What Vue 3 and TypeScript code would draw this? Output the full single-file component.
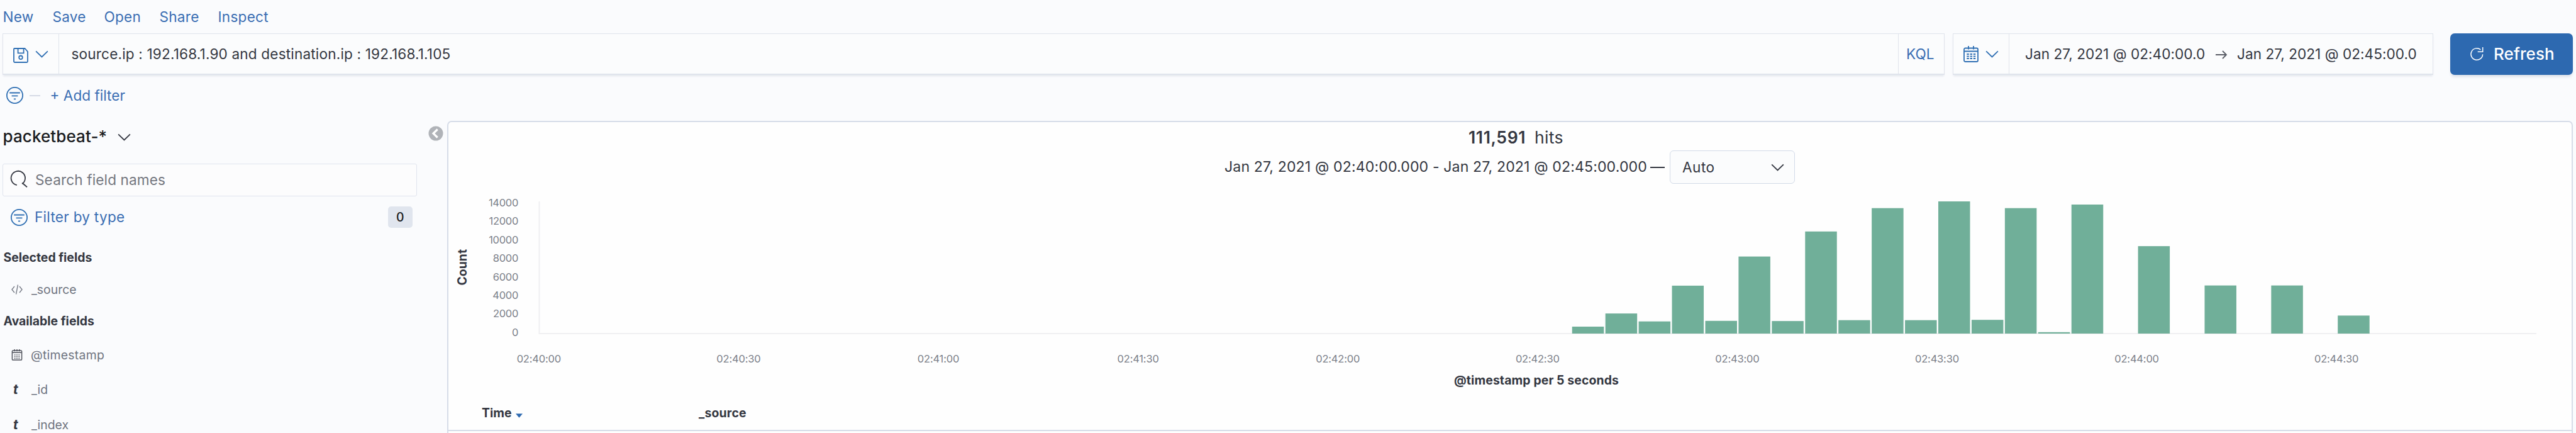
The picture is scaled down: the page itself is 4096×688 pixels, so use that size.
<script setup lang="ts">
const menu = [
  { label: 'New', cls: 'm-new' },
  { label: 'Save', cls: 'm-save' },
  { label: 'Open', cls: 'm-open' },
  { label: 'Share', cls: 'm-share' },
  { label: 'Inspect', cls: 'm-inspect' },
]

const yTicks = [14000, 12000, 10000, 8000, 6000, 4000, 2000, 0]
const xTicks = ['02:40:00', '02:40:30', '02:41:00', '02:41:30', '02:42:00', '02:42:30', '02:43:00', '02:43:30', '02:44:00', '02:44:30']

const chartWidth = 3176
const bucketCount = 60
const firstBucket = 31
const pitch = chartWidth / bucketCount
const heights = [11, 31.9, 19.3, 76.1, 20.2, 122.4, 19.9, 162.2, 21.3, 199.3, 21.3, 210, 21.8, 199.3, 2.2, 205, 0, 138.9, 0, 76.4, 0, 76.4, 0, 28.6]
const bars = heights
  .map((h, i) => ({ x: (firstBucket + i) * pitch + 1.8, y: 210 - h, h }))
  .filter((b) => b.h > 0)
</script>

<template>
  <div class="app">
    <nav class="menu">
      <a v-for="m in menu" :key="m.label" :class="m.cls"><span>{{ m.label }}</span></a>
    </nav>

    <div class="querybar">
      <div class="box query">
        <div class="saved">
          <svg class="floppy" viewBox="0 0 24 24"><path d="M2 1h16.500L23 6v15.500a1.500 1.500 0 0 1-1.500 1.500h-19A1.500 1.500 0 0 1 1 21.500V2a1 1 0 0 1 1-1zM7.600 1v7.300h9V1" /><circle cx="12" cy="15.300" r="2.800" /></svg>
          <svg class="chev" viewBox="0 0 22 12"><path d="M1.2 1.2 11 10.6 20.8 1.2" /></svg>
        </div>
        <div class="qtext"><span class="t-query">source.ip : 192.168.1.90 and destination.ip : 192.168.1.105</span></div>
        <div class="kql"><span class="t-kql">KQL</span></div>
      </div>
      <div class="box dates">
        <div class="quick">
          <svg class="cal" viewBox="0 0 24 26"><path d="M3 3.5h18a2 2 0 0 1 2 2V23a2 2 0 0 1-2 2H3a2 2 0 0 1-2-2V5.500a2 2 0 0 1 2-2zM1 8.500h22M8 0v5.500M16 0v5.500" /><path class="dots" d="M5.300 13h14M5.300 16.500h14M5.300 20h14" /></svg>
          <svg class="chev" viewBox="0 0 22 12"><path d="M1.2 1.2 11 10.6 20.8 1.2" /></svg>
        </div>
        <span class="from">Jan 27, 2021 @ 02:40:00.0</span>
        <svg class="arrow" viewBox="0 0 18 14"><path d="M0 7h16.500M11 1l6 6-6 6" /></svg>
        <span class="to">Jan 27, 2021 @ 02:45:00.0</span>
      </div>
      <button class="refresh">
        <svg viewBox="0 0 21 22"><path d="M16.300 3.900A9.300 9.300 0 1 0 19.600 11.200M19.700 0v7.200h-8" /></svg>
        <span class="t-refresh">Refresh</span>
      </button>
    </div>

    <div class="filters">
      <svg class="filt" viewBox="0 0 27 27"><circle cx="13.500" cy="13.500" r="12.600" /><path d="M5.200 9.500h16.600M8.600 14.400h9.800M11.900 19.300h3.200" /></svg>
      <i class="dash"></i>
      <span class="t-add">+ Add filter</span>
    </div>

    <div class="body">
      <aside class="side">
        <div class="pattern">
          <span class="t-pattern">packetbeat-*</span>
          <svg class="chev dark" viewBox="0 0 22 12"><path d="M1.2 1.2 11 10.6 20.8 1.2" /></svg>
          <svg class="collapse" viewBox="0 0 24 24"><circle cx="12" cy="12" r="11.500" /><path d="M14.700 5.500 8 12l6.700 6.500" /></svg>
        </div>
        <div class="search">
          <svg viewBox="0 0 27 27"><path d="M9.800 23A11.200 11.200 0 1 1 18.200 21.200M18.200 19.500 26 26.300" /></svg>
          <span class="t-search">Search field names</span>
        </div>
        <div class="bytype">
          <svg class="filt" viewBox="0 0 27 27"><circle cx="13.500" cy="13.500" r="12.600" /><path d="M5.200 9.500h16.600M8.600 14.400h9.800M11.900 19.300h3.200" /></svg>
          <span class="t-type">Filter by type</span>
          <b>0</b>
        </div>
        <h4 class="h-sel"><span>Selected fields</span></h4>
        <div class="field f-source">
          <svg viewBox="0 0 18 16"><path class="thin" d="M5 3 1 8l4 5M13 3l4 5-4 5M10.500 .5l-3 15" /></svg>
          <span>_source</span>
        </div>
        <h4 class="h-avail"><span>Available fields</span></h4>
        <div class="field f-ts">
          <svg viewBox="0 0 18 19"><path class="calp" d="M2.500 2h13a1.500 1.500 0 0 1 1.500 1.500v13a1.500 1.500 0 0 1-1.500 1.500h-13A1.500 1.500 0 0 1 1 16.500v-13A1.500 1.500 0 0 1 2.500 2zM1 5.500h16M5 0v3.500M9 0v3.500M13 0v3.500" /><path class="cald" d="M4.500 9.500h9M4.500 12.500h9M4.500 15.200h9" /></svg>
          <span class="t-ts">@timestamp</span>
        </div>
        <div class="field f-id"><em>t</em><span>_id</span></div>
        <div class="field f-index"><em>t</em><span>_index</span></div>
      </aside>

      <main class="panel">
        <div class="hits"><strong>111,591</strong><span>hits</span></div>
        <div class="range">
          <span class="t-range">Jan 27, 2021 @ 02:40:00.000 - Jan 27, 2021 @ 02:45:00.000</span>
          <i></i>
          <div class="select">
            <span class="t-auto">Auto</span>
            <svg class="chev dark" viewBox="0 0 22 12"><path d="M1.2 1.2 11 10.6 20.8 1.2" /></svg>
          </div>
        </div>
        <div class="chart">
          <div class="ytitle"><span>Count</span></div>
          <div class="yaxis"><span v-for="t in yTicks" :key="t">{{ t }}</span></div>
          <div class="plot">
            <svg viewBox="0 0 3178 212">
              <path class="axis" d="M.5 0v210H3176" />
              <rect v-for="b in bars" :key="b.x" class="bar" :x="b.x" :y="b.y" width="50.500" :height="b.h" />
            </svg>
            <div class="xaxis"><span v-for="t in xTicks" :key="t">{{ t }}</span></div>
          </div>
        </div>
        <div class="xtitle"><span>@timestamp per 5 seconds</span></div>
        <div class="thead">
          <span class="th-time">Time</span>
          <svg viewBox="0 0 12 7"><path d="M0 0h12L6 7z" /></svg>
          <span class="th-source">_source</span>
        </div>
      </main>
    </div>
  </div>
</template>

<style>
html, body { margin: 0; background: #fafbfd; overflow: hidden; }
</style>

<style scoped>
* { box-sizing: border-box; }
.app { width: 4096px; height: 688px; overflow: hidden; background: #fafbfd; color: #343741; font: 400 22.6px/28px Inter, "Liberation Sans", sans-serif; white-space: nowrap; display: flex; flex-direction: column; }
svg { display: block; flex: none; fill: none; stroke: #2f6fb3; stroke-width: 1.8; overflow: visible; }
.menu { height: 53px; flex: none; padding: 13px 0 0 4.500px; display: flex; color: #3a6eb3; letter-spacing: .25px; }
.m-new { width: 79px; }
.m-save { width: 82px; }
.m-open { width: 88px; }
.m-share { width: 93px; }

.querybar { display: flex; height: 66px; flex: none; padding-left: 4px; }
.box { height: 66px; border: 1.5px solid #e0e4ec; border-bottom-width: 2px; box-shadow: 0 3px 3px -1px #e4e7ee; display: flex; align-items: center; background: #fbfcfd; }
.query { width: 3088px; margin-right: 13px; }
.saved { width: 89px; height: 100%; border-right: 1.5px solid #e0e4ec; display: flex; align-items: center; padding-left: 16px; }
.floppy { width: 24px; height: 24px; margin: 4px 11px 0 0; }
.chev { width: 21px; height: 12px; stroke-width: 1.9; }
.chev.dark { stroke: #343741; }
.qtext { flex: 1; padding-left: 19.500px; }
.t-query { letter-spacing: .16px; }
.kql { width: 73px; height: 100%; border-left: 1.5px solid #e0e4ec; padding-left: 12px; display: flex; align-items: center; color: #3a6eb3; }
.dates { width: 764px; margin-right: 27px; }
.quick { width: 89px; height: 100%; border-right: 1.5px solid #e0e4ec; display: flex; align-items: center; padding-left: 16px; }
.cal { width: 24px; height: 26px; margin-right: 11px; }
.dots { stroke-width: 2; stroke-dasharray: 3.500 1.750; }
.from { width: 286px; margin-left: 25px; letter-spacing: .035px; }
.to { letter-spacing: .035px; }
.arrow { width: 18px; height: 14px; margin: 3px 16.500px 0 16.500px; stroke: #5a5d66; }
.refresh { width: 195px; height: 66px; border: 0; border-radius: 7px; background: #2d69b0; color: #fff; font: 500 26px/32px Inter, sans-serif; display: flex; align-items: center; padding: 0 0 0 32px; box-shadow: 0 4px 4px -1px #dbe0e9; letter-spacing: .1px; }
.refresh svg { width: 21px; height: 22px; margin-right: 16px; stroke: #fff; stroke-width: 1.500; }

.filters { height: 73px; flex: none; padding: 19px 0 0 10px; display: flex; color: #3a6eb3; align-items: flex-start; }
.filt { width: 27px; height: 27px; stroke-width: 1.8; }
.dash { width: 17px; height: 2px; background: #d6dae6; margin: 13px 15.500px 0 10px; }

.body { display: flex; height: 496px; flex: none; }
.side { width: 711px; display: flex; flex-direction: column; }
.pattern { height: 67.500px; flex: none; display: flex; padding-left: 4.500px; align-items: flex-start; }
.t-pattern { font: 500 26px/32px Inter, sans-serif; width: 164px; margin: 8.500px 18px 0 0; color: #1a1c21; letter-spacing: .1px; }
.pattern .chev { margin-top: 20px; }
.collapse { width: 24px; height: 24px; margin: 7.500px 0 0 473px; }
.collapse circle { fill: #b0b3b8; stroke: none; }
.collapse path { stroke: #fff; stroke-width: 3.200; }
.search { width: 659px; height: 52px; margin-left: 4px; border: 1.5px solid #e0e4ee; border-radius: 3px; background: #fcfcfd; display: flex; align-items: center; flex: none; padding-left: 12px; color: #74777f; letter-spacing: .12px; }
.search svg { width: 27px; height: 27px; stroke: #343741; margin: 0 12px 2px 0; }
.bytype { display: flex; align-items: center; height: 34px; margin-top: 16.500px; padding-left: 17px; color: #3a6eb3; flex: none; letter-spacing: .26px; }
.bytype .filt { margin-right: 11px; }
.bytype span { width: 562px; }
.bytype b { width: 39px; height: 34px; border-radius: 5px; background: #e0e5ee; color: #1a1c21; font: 500 19.400px/34px Inter, sans-serif; text-align: center; }
h4 { font: 700 19.400px/24px Inter, sans-serif; margin: 0; padding-left: 5.500px; color: #343741; flex: none; }
.h-sel { margin-top: 34.500px; }
.h-avail { margin-top: 25px; }
.field { height: 26px; flex: none; display: flex; align-items: center; padding-left: 18px; font-size: 19.400px; color: #6f7480; }
.field svg { width: 18px; height: 18px; margin-right: 14px; }
.field em { width: 32px; padding-left: 3px; font: italic 700 21px/26px Inter, sans-serif; color: #343741; }
.t-ts { letter-spacing: .26px; margin-left: -1px; }
.thin { stroke: #787c87; stroke-width: 1.400; }
.calp { stroke: #53565f; stroke-width: 1.600; }
.cald { stroke: #53565f; stroke-width: 1.600; stroke-dasharray: 2 1.500; }
.f-source { margin-top: 26px; }
.f-ts { margin-top: 29px; }
.f-id { margin-top: 29.500px; }
.f-index { margin-top: 30px; }

.panel { width: 3380px; height: 520px; border: 2px solid #d6dce8; border-radius: 7px; background: #fefefe; display: flex; flex-direction: column; }
.hits { height: 45px; flex: none; padding: 8px 0 0 1622px; display: flex; font-size: 26.600px; line-height: 32px; letter-spacing: .3px; }
.hits strong { width: 105px; font-weight: 600; letter-spacing: .6px; }
.range { height: 53px; flex: none; display: flex; align-items: flex-start; padding-left: 1234px; }
.t-range { width: 670px; margin-top: 12px; font-size: 23.100px; letter-spacing: .125px; }
.range i { width: 23px; height: 2px; background: #343741; margin: 26px 8px 0 7px; }
.select { width: 199px; height: 53px; border: 1.5px solid #d3dbe8; border-radius: 6px; background: #fbfcfd; display: flex; align-items: center; justify-content: space-between; padding: 0 16px 0 19px; }
.t-auto { letter-spacing: .5px; }
.chart { display: flex; height: 280px; flex: none; }
.ytitle { width: 34px; display: flex; align-items: flex-start; justify-content: center; padding: 104px 0 0 10px; }
.ytitle span { writing-mode: vertical-rl; transform: rotate(180deg); font: 700 19.400px/24px Inter, sans-serif; }
.yaxis { width: 77px; display: flex; flex-direction: column; align-items: flex-end; padding-top: 16px; font-size: 16.500px; line-height: 29.400px; color: #7b7f89; letter-spacing: -.3px; }
.plot { margin: 27.500px 0 0 33px; width: 3180px; }
.plot svg { width: 3178px; height: 212px; }
.axis { stroke: #f0f0f2; stroke-width: 2; }
.bar { fill: #70af99; stroke: none; }
.xaxis { display: flex; margin: 27px 0 0 -159px; font-size: 16.500px; line-height: 22px; color: #7b7f89; letter-spacing: -.2px; }
.xaxis span { width: 317.600px; text-align: center; flex: none; }
.xtitle { font: 700 19.400px/24px Inter, sans-serif; padding-left: 1599px; height: 63px; margin-top: 20px; flex: none; letter-spacing: .115px; }
.thead { height: 40.500px; margin-top: -11px; flex: none; border-bottom: 2px solid #d6dce8; display: flex; padding-left: 53px; font: 700 19.400px/24px Inter, sans-serif; }
.thead svg { width: 11px; height: 7px; margin: 13px 280px 0 8px; }
.thead svg path { fill: #2d69b0; stroke: none; }
.th-time { width: 46px; }
.th-source { letter-spacing: .19px; }
</style>
